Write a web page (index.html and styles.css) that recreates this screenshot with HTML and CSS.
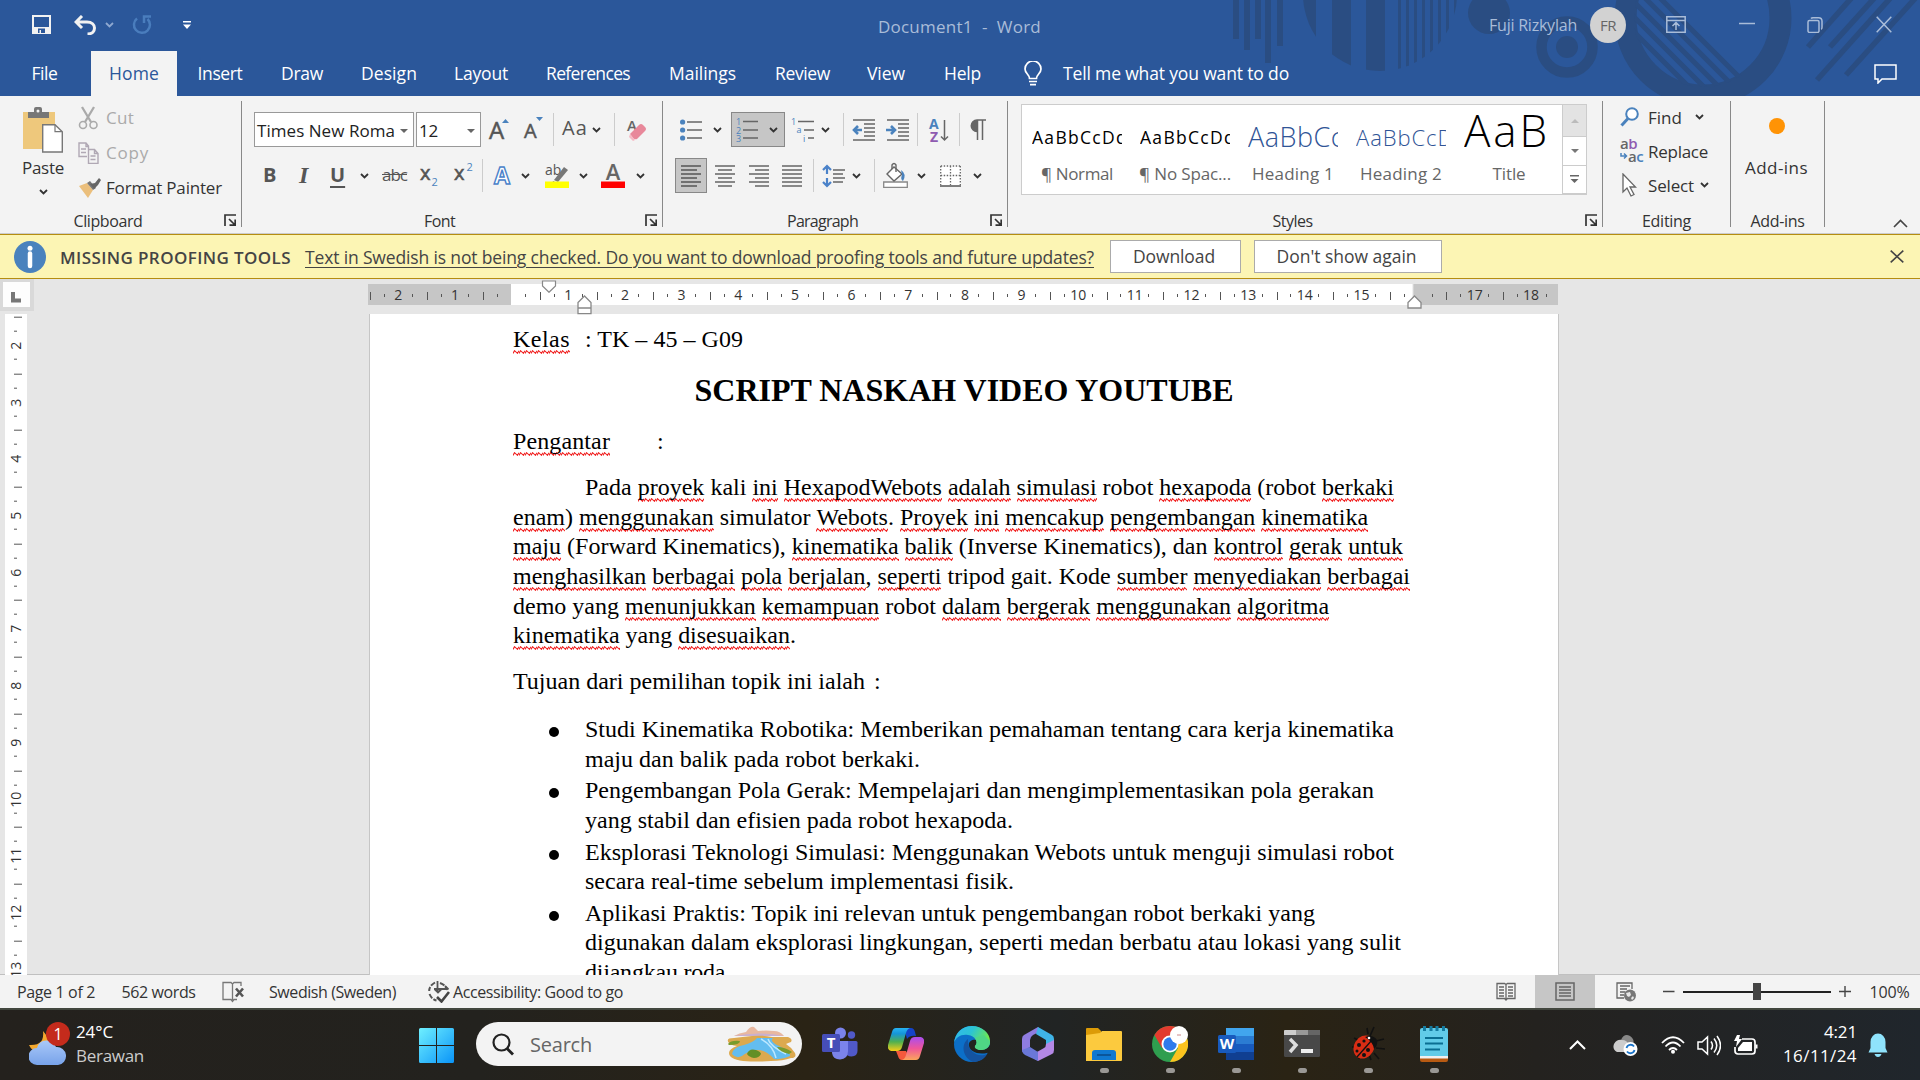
FILE: index.html
```html
<!DOCTYPE html>
<html lang="id">
<head>
<meta charset="utf-8">
<title>Document1 - Word</title>
<link rel="stylesheet" href="styles.css">
</head>
<body>
<svg width="0" height="0" class="defs">
  <defs>
    <symbol id="chev" viewBox="0 0 9 6"><path d="M1 1l3.500 3.500L8 1" fill="none" stroke="currentColor" stroke-width="1.800"/></symbol>
    <symbol id="tri" viewBox="0 0 8 4"><path d="M0 0h8L4 4z" fill="currentColor"/></symbol>
    <symbol id="launch" viewBox="0 0 12 12"><path d="M1 12V1h11M5 5l6 6M11.200 5.500v5.700H5.500" fill="none" stroke="#333" stroke-width="1.700"/></symbol>
    <symbol id="river" viewBox="0 0 71 36"><path d="M8 10q5-3 12-4 4-6 8-5l4 4q8-1 16 0 6 0 10 5z" fill="#e8b8a0"/><path d="M8 10q25-5 50 0z" fill="#c9b0cf"/><path d="M3 17q-4-5 5-5 8-1 18-2 12-1 20 1l16 0q5 2 3 5-3 1-5 2 5 3 9 9 2 5-4 5-8 3-20 3-12 1-28 0Q3 33 3 27q0-4 8-7-7-1-8-3z" fill="#dca94f"/><path d="M6 28q1-7 12-9 10-3 13-7h16q-4 3 6 8 12 6 11 10-8 4-16 3-9-10-18-9-10 2-14 6-6 3-10-2z" fill="#63bdf0"/><path d="M35 13q12 6 15 19M42 13q2 7 18 15" stroke="#bde8ff" fill="none" stroke-width="1.500"/><path d="M21 28q2-6 9-4 5 2 5 4-2 4-7 4-5-1-7-4z" fill="#638f26"/><path d="M2 18q3-4 12-3 0 4-11 4zM51 21q8 0 15 5l-3 2q-9-2-12-7z" fill="#789b2d"/></symbol>
  </defs>
</svg>

<header class="top">
  <svg class="decor" width="720" height="96" viewBox="1200 0 720 96">
    <defs><clipPath id="ball"><circle cx="1380" cy="-6" r="77"/></clipPath><clipPath id="ring"><circle cx="1703" cy="18" r="69"/></clipPath></defs>
    <g fill="#2a4d82">
      <path d="M1233 0h6v39h-6zM1244 0h6v50h-6zM1255 0h6v39h-6zM1265 0h6v63h-6zM1277 0h6v46h-6z"/>
      <path clip-path="url(#ball)" d="M1300 0h16v80h-16zM1332 0h19v80h-19zM1366 0h19v80h-19zM1398 0h3v80h-3zM1406 0h3v80h-3zM1414 0h3v80h-3zM1422 0h3v80h-3zM1430 0h3v80h-3zM1438 0h3v80h-3zM1446 0h3v80h-3zM1454 0h3v80h-3z"/>
      <circle cx="1489" cy="13" r="21"/><circle cx="1567" cy="47" r="11"/>
    </g>
    <g fill="none" stroke="#2a4d82">
      <circle cx="1567" cy="47" r="25.500" stroke-width="10.500"/>
      <circle cx="1703" cy="18" r="77.500" stroke-width="22"/>
      <path clip-path="url(#ring)" stroke-width="5" d="M1620 18l90 90M1620 3l100 100M1620-12l115 115M1620-27l120 120M1620-42l130 130"/>
      <path stroke-width="5.500" d="M1808 47l47-53M1830 47l48-53M1817 80l77-86M1846 75l74-82"/>
    </g>
  </svg>
  <div class="titlebar">
    <svg width="19" height="19" viewBox="0 0 19 19"><path d="M1 1h17v17H1z" fill="none" stroke="#f2f2f2" stroke-width="2"/><path d="M1 12h17v7H1z" fill="#f2f2f2"/><path d="M6 13.500h7V18H9v-3H7.500v3H6z" fill="#2b579a"/></svg>
    <svg width="23" height="20" viewBox="0 0 23 20"><path d="M8 1L2 7l6 6M2.500 7H13c5 0 7.500 3 7.500 6s-2 6-7 6" fill="none" stroke="#f2f2f2" stroke-width="3"/></svg>
    <svg class="dim" width="9" height="6"><use href="#chev"/></svg>
    <svg width="20" height="20" viewBox="0 0 20 20"><path d="M5 3.500A8 8 0 1 0 15.500 4M12 8V1.500h7" fill="none" stroke="#4a7dbd" stroke-width="2.500"/></svg>
    <svg width="8" height="8" viewBox="0 0 8 8"><path d="M0 0h8v1.500H0zM0 3.500h8L4 8z" fill="#fff"/></svg>
    <span class="doc-name" data-w="163">Document1  -  Word</span>
    <span class="user" data-w="88">Fuji Rizkylah</span>
    <span class="avatar">FR</span>
    <svg width="20" height="17" viewBox="0 0 20 17"><path d="M.8.800h18.400v15.400H.8zM1 4.500h18M10 14V7M6.500 10L10 6.500l3.500 3.500" fill="none" stroke="#a9bcd8" stroke-width="1.500"/></svg>
    <svg width="16" height="16" viewBox="0 0 16 16"><path d="M0 6.500h16" stroke="#a9bcd8" stroke-width="1.500"/></svg>
    <svg width="16" height="16" viewBox="0 0 16 16"><path d="M1 5a1.500 1.500 0 0 1 1.500-1.500h8A1.500 1.500 0 0 1 12 5v9a1.500 1.500 0 0 1-1.500 1.500h-8A1.500 1.500 0 0 1 1 14zM4 1.500Q4.500.8 6 .8h5.500q3.500 0 3.500 3.500v6q0 1.500-.8 2" fill="none" stroke="#a9bcd8" stroke-width="1.500"/></svg>
    <svg width="16" height="17" viewBox="0 0 16 17"><path d="M.7.700l14.600 15.600M15.300.7L.7 16.300" stroke="#a9bcd8" stroke-width="1.500"/></svg>
  </div>
  <nav class="tabs">
    <span data-w="26">File</span>
    <span class="active"><b data-w="50">Home</b></span>
    <span data-w="45">Insert</span>
    <span data-w="42">Draw</span>
    <span data-w="56">Design</span>
    <span data-w="54">Layout</span>
    <span data-w="84">References</span>
    <span data-w="67">Mailings</span>
    <span data-w="55">Review</span>
    <span data-w="38">View</span>
    <span data-w="37">Help</span>
    <svg width="18" height="25" viewBox="0 0 18 25"><path d="M5.500 17.500c0-4-4.500-5-4.500-9.500a8 8 0 0 1 16 0c0 4.500-4.500 5.500-4.500 9.500zM5 20.500h8M6 23.700h6" fill="none" stroke="#fff" stroke-width="1.700"/></svg>
    <span data-w="226">Tell me what you want to do</span>
    <svg width="23" height="20" viewBox="0 0 23 20"><path d="M1 1h21v14H8l-4 4v-4H1z" fill="none" stroke="#fff" stroke-width="1.500"/></svg>
  </nav>
</header>

<section class="ribbon">
  <div class="group g-clip">
    <div class="body clip">
      <div class="paste">
        <svg width="42" height="46" viewBox="0 0 42 46"><path d="M1 5h32v37H1z" fill="#eec87c"/><path d="M6 11V5h6V2q0-2 2-2h4q2 0 2 2v3h7v6z" fill="#777"/><circle cx="16" cy="4" r="1.500" fill="#f3f3f3"/><path d="M20.700 17.700H33l7.300 7V45H20.700z" fill="#fff" stroke="#777" stroke-width="1.400"/><path d="M33 17.700v7h7" fill="none" stroke="#777" stroke-width="1.200"/></svg>
        <span data-w="42">Paste</span>
        <svg width="9" height="6"><use href="#chev"/></svg>
      </div>
      <div class="clip-list">
        <div class="off"><svg width="22" height="24" viewBox="0 0 22 24"><path d="M4 1l9 15M16 1L7 16" fill="none" stroke="#aaa" stroke-width="2.300"/><circle cx="5" cy="19" r="3.500" fill="none" stroke="#aaa" stroke-width="1.600"/><circle cx="15.500" cy="19" r="3.500" fill="none" stroke="#aaa" stroke-width="1.600"/></svg><span data-w="28">Cut</span></div>
        <div class="off"><svg width="22" height="22" viewBox="0 0 22 22"><path d="M9 14.500H1V1h7l2.500 3v3M8 1v3.500h2.500M10.500 7.500h6l3.500 4v10h-9.500zM16.500 7.500v4H20M3 7h5M3 10.500h5M12.500 14h5M12.500 17.500h5" fill="none" stroke="#b0a8b4" stroke-width="1.400"/></svg><span data-w="43">Copy</span></div>
        <div><svg width="24" height="22" viewBox="0 0 24 22"><path d="M1 9l8-3 6 7-5 8z" fill="#ebbf7c"/><path d="M9 6l3-2 6 7-3 2z" fill="#777"/><path d="M12 7l5-1 4-5 2 2-3 5-4 4z" fill="#666"/></svg><span data-w="116">Format Painter</span></div>
      </div>
    </div>
    <div class="foot"><span data-w="69">Clipboard</span><svg width="12" height="12"><use href="#launch"/></svg></div>
  </div>
  <i class="gsep"></i>

  <div class="group g-font">
    <div class="body rows">
      <div class="row font1">
        <div class="combo wide"><span data-w="138">Times New Roma</span><svg width="8" height="4"><use href="#tri"/></svg></div>
        <div class="combo size"><span data-w="19">12</span><svg width="8" height="4"><use href="#tri"/></svg></div>
        <span class="glyph grow">A<svg width="7" height="4"><path d="M0 4h7L3.500 0z" fill="#4a82bd"/></svg></span>
        <span class="glyph shrink">A<svg width="7" height="4"><path d="M0 0h7L3.500 4z" fill="#4a82bd"/></svg></span>
        <i class="sep"></i>
        <span class="glyph case" data-w="26">Aa</span>
        <svg width="9" height="6"><use href="#chev"/></svg>
        <i class="sep"></i>
        <svg width="20" height="24" viewBox="0 0 20 24"><text x="0" y="13" class="svg-a">A</text><path d="M3 16l9-9q2-2 4 0l2 2q2 2 0 4l-8 8q-2 1-4-1z" fill="#e8889a"/><path d="M3 16l5 6-2 1-4-4z" fill="#f6b9c4"/></svg>
      </div>
      <div class="row font2">
        <b class="glyph">B</b>
        <span class="glyph italic">I</span>
        <b class="glyph under">U</b>
        <svg width="9" height="6"><use href="#chev"/></svg>
        <s class="glyph strike" data-w="25">abc</s>
        <span class="glyph script">x<em class="lo">2</em></span>
        <span class="glyph script">x<em class="hi">2</em></span>
        <i class="sep"></i>
        <b class="glyph effects">A</b>
        <svg width="9" height="6"><use href="#chev"/></svg>
        <svg width="25" height="25" viewBox="0 0 25 25"><text x="0" y="12" class="svg-ab">ab</text><path d="M9 17l10-13 4 3-10 12z" fill="#777"/><path d="M8 18l4 2-5 1z" fill="#777"/><path d="M0 18.500h24V25H0z" fill="#ff0"/></svg>
        <svg width="9" height="6"><use href="#chev"/></svg>
        <svg width="25" height="25" viewBox="0 0 25 25"><text x="12" y="17" class="svg-red">A</text><path d="M0 18.500h24V25H0z" fill="#f00"/></svg>
        <svg width="9" height="6"><use href="#chev"/></svg>
      </div>
    </div>
    <div class="foot"><span data-w="31">Font</span><svg width="12" height="12"><use href="#launch"/></svg></div>
  </div>
  <i class="gsep"></i>

  <div class="group g-para">
    <div class="body rows">
      <div class="row para1">
        <svg width="22" height="22" viewBox="0 0 22 22"><path d="M7 3h15M7 11h15M7 19h15" stroke="#666" stroke-width="1.400"/><g fill="#4a82bd"><circle cx="2.600" cy="3" r="2.600"/><circle cx="2.600" cy="11" r="2.600"/><circle cx="2.600" cy="19" r="2.600"/></g></svg>
        <svg width="9" height="6"><use href="#chev"/></svg>
        <span class="pressed"><svg width="22" height="24" viewBox="0 0 22 24"><path d="M7 3.500h15M7 12h15M7 20h15" stroke="#666" stroke-width="1.400"/><g class="svg-num"><text x="0" y="7">1</text><text x="0" y="15.500">2</text><text x="0" y="24">3</text></g></svg><svg width="9" height="6"><use href="#chev"/></svg></span>
        <svg width="24" height="24" viewBox="0 0 24 24"><path d="M7 3.500h16M13 12h10M17 20h6" stroke="#666" stroke-width="1.400"/><g class="svg-num"><text x="0" y="7">1</text><text x="5.500" y="15">a</text><text x="12" y="23.500">i</text></g></svg>
        <svg width="9" height="6"><use href="#chev"/></svg>
        <i class="sep"></i>
        <svg width="23" height="22" viewBox="0 0 23 22"><path d="M1 1h22M12 5h11M12 9h11M12 13h11M12 17h11M1 21h22" stroke="#666" stroke-width="1.400"/><path d="M10 11H2M6 7l-4 4 4 4" fill="none" stroke="#4a82bd" stroke-width="2.600"/></svg>
        <svg width="23" height="22" viewBox="0 0 23 22"><path d="M1 1h22M12 5h11M12 9h11M12 13h11M12 17h11M1 21h22" stroke="#666" stroke-width="1.400"/><path d="M0 11h8M5 7l4 4-4 4" fill="none" stroke="#4a82bd" stroke-width="2.600"/></svg>
        <i class="sep"></i>
        <svg width="20" height="24" viewBox="0 0 20 24"><text x="0" y="11" class="svg-sa">A</text><text x="1" y="24" class="svg-sz">Z</text><path d="M15.500 2v20M12 18.500l3.500 3.500 3.500-3.500" fill="none" stroke="#666" stroke-width="1.500"/></svg>
        <i class="sep"></i>
        <svg width="17" height="22" viewBox="0 0 17 22"><path d="M16 1H7a5.500 5.500 0 0 0 0 11.500V1M7.500 1v20M12.500 1v20" fill="none" stroke="#666" stroke-width="1.500"/><path d="M7 1a5.500 5.500 0 0 0 0 11.500z" fill="#666"/></svg>
      </div>
      <div class="row para2">
        <span class="pressed one"><svg width="21" height="22" viewBox="0 0 21 22"><path d="M0 1h20M0 5h16M0 9h20M0 13h16M0 17h20M0 21h16" stroke="#555" stroke-width="1.400"/></svg></span>
        <svg width="21" height="22" viewBox="0 0 21 22"><path d="M0 1h20M3 5h14M0 9h20M3 13h14M0 17h20M3 21h14" stroke="#666" stroke-width="1.400"/></svg>
        <svg width="21" height="22" viewBox="0 0 21 22"><path d="M0 1h20M6 5h14M0 9h20M6 13h14M0 17h20M6 21h14" stroke="#666" stroke-width="1.400"/></svg>
        <svg width="21" height="22" viewBox="0 0 21 22"><path d="M0 1h20M0 5h20M0 9h20M0 13h20M0 17h20M0 21h20" stroke="#666" stroke-width="1.400"/></svg>
        <i class="sep"></i>
        <svg width="23" height="24" viewBox="0 0 23 24"><path d="M11 6h12M11 10h10M11 14h12M11 18h10" stroke="#666" stroke-width="1.400"/><path d="M5 2v8M5 14v8M1 6l4-4 4 4M1 18l4 4 4-4" fill="none" stroke="#4a82c9" stroke-width="2.200"/></svg>
        <svg width="9" height="6"><use href="#chev"/></svg>
        <i class="sep"></i>
        <svg width="25" height="25" viewBox="0 0 25 25"><path d="M.7 19h23.600v5.300H.7z" fill="#fff" stroke="#888" stroke-width="1.300"/><path d="M4 11l7-7 8 7-8 7z" fill="#fff" stroke="#666" stroke-width="1.400"/><path d="M9 6V2q2-3 4 0v7" fill="none" stroke="#666" stroke-width="1.400"/><path d="M18 7q6 4 2 11-3-2-1-6z" fill="#4a82bd"/></svg>
        <svg width="9" height="6"><use href="#chev"/></svg>
        <svg width="21" height="22" viewBox="0 0 21 22"><path d="M0 0h21v21H0z" fill="#fff"/><path d="M.7 1h20M.7 10.500h20M.7 1v19M10.500 1v19M20.300 1v19" fill="none" stroke="#666" stroke-width="1.300" stroke-dasharray="1.500 1.500"/><path d="M0 21h21" stroke="#555" stroke-width="1.500"/></svg>
        <svg width="9" height="6"><use href="#chev"/></svg>
      </div>
    </div>
    <div class="foot"><span data-w="71">Paragraph</span><svg width="12" height="12"><use href="#launch"/></svg></div>
  </div>
  <i class="gsep"></i>

  <div class="group g-styles">
    <div class="body">
      <div class="gallery">
        <div class="style"><div class="sample s-normal"><span data-w="96">AaBbCcDd</span></div><span data-w="72">¶ Normal</span></div>
        <div class="style"><div class="sample s-normal"><span data-w="96">AaBbCcDd</span></div><span data-w="92">¶ No Spac...</span></div>
        <div class="style"><div class="sample s-h1"><span data-w="96">AaBbCc</span></div><span data-w="82">Heading 1</span></div>
        <div class="style"><div class="sample s-h2"><span data-w="98">AaBbCcD</span></div><span data-w="82">Heading 2</span></div>
        <div class="style"><div class="sample s-title"><span data-w="86">AaB</span></div><span data-w="33">Title</span></div>
        <div class="scroll">
          <span class="disabled"><svg width="8" height="4"><path d="M0 4h8L4 0z" fill="#bbb"/></svg></span>
          <span><svg width="8" height="4"><use href="#tri"/></svg></span>
          <span><svg width="9" height="9"><path d="M0 0h9v1.500H0zM.5 4h8l-4 4z" fill="#666"/></svg></span>
        </div>
      </div>
    </div>
    <div class="foot"><span data-w="40">Styles</span><svg width="12" height="12"><use href="#launch"/></svg></div>
  </div>
  <i class="gsep"></i>

  <div class="group g-edit">
    <div class="body edit-list">
      <div><svg width="20" height="20" viewBox="0 0 20 20"><circle cx="12" cy="7" r="5.800" fill="#fff" stroke="#4a82bd" stroke-width="2"/><path d="M8 11.500L1.500 18.500" stroke="#4a82bd" stroke-width="3"/></svg><span data-w="34">Find</span><svg class="c1" width="9" height="6"><use href="#chev"/></svg></div>
      <div><svg width="24" height="24" viewBox="0 0 24 24"><text x="0" y="10" class="svg-r">a<tspan fill="#8f5bb0">b</tspan></text><text x="8" y="22.500" class="svg-r">a<tspan fill="#4a82bd">c</tspan></text><path d="M1 14v3h5M4 14.500L6.500 17 4 19.500" fill="none" stroke="#4a82bd" stroke-width="1.500"/></svg><span data-w="60">Replace</span></div>
      <div><svg width="18" height="24" viewBox="0 0 18 24"><path d="M3 1v18l4-4 4 8 3-1.500-4-7.500h5.500z" fill="#fff" stroke="#666" stroke-width="1.300"/></svg><span data-w="46">Select</span><svg class="c2" width="9" height="6"><use href="#chev"/></svg></div>
    </div>
    <div class="foot"><span data-w="49">Editing</span></div>
  </div>
  <i class="gsep"></i>

  <div class="group g-add">
    <div class="body addins"><svg width="18" height="18"><circle cx="9" cy="9" r="8" fill="#ff9305"/></svg><span data-w="63">Add-ins</span></div>
    <div class="foot"><span data-w="54">Add-ins</span></div>
  </div>
  <i class="gsep"></i>
  <svg class="collapse" width="15" height="9" viewBox="0 0 15 9"><path d="M1 8l6.500-6.500L14 8" fill="none" stroke="#444" stroke-width="1.600"/></svg>
</section>

<section class="notice">
  <svg width="32" height="32"><circle cx="16" cy="16" r="16" fill="#4a82bd"/><path d="M16 12.500v12.500" stroke="#fff" stroke-width="4.500" stroke-linecap="round"/><circle cx="16" cy="7.300" r="2.500" fill="#fff"/></svg>
  <b data-w="231">MISSING PROOFING TOOLS</b>
  <a data-w="789">Text in Swedish is not being checked. Do you want to download proofing tools and future updates?</a>
  <span class="btn dl"><i data-w="82">Download</i></span>
  <span class="btn again"><i data-w="140">Don't show again</i></span>
  <svg class="close" width="14" height="13" viewBox="0 0 14 13"><path d="M.7.700l12.600 11.600M13.300.7L.7 12.300" stroke="#444" stroke-width="1.600"/></svg>
</section>

<main class="work">
  <div class="hruler-bar">
    <div class="tabsel"><span><svg width="10" height="11"><path d="M2 0v8.500h8" fill="none" stroke="#777" stroke-width="4"/></svg></span></div>
    <div class="hruler">
      <i></i><i>2</i><i>1</i><i></i><i>1</i><i>2</i><i>3</i><i>4</i><i>5</i><i>6</i><i>7</i><i>8</i><i>9</i><i>10</i><i>11</i><i>12</i><i>13</i><i>14</i><i>15</i><i></i><i>17</i><i>18</i>
      <svg class="m-first" width="17" height="13" viewBox="0 0 17 13"><path d="M1.500 1h13v5L8 12.300 1.500 6z" fill="#fff" stroke="#888" stroke-width="1.200"/></svg>
      <svg class="m-left" width="15" height="20" viewBox="0 0 15 20"><path d="M1 18.700V7.500L7.500 1 14 7.500v11.200zM1 13h13" fill="#fff" stroke="#888" stroke-width="1.300"/></svg>
      <svg class="m-right" width="15" height="14" viewBox="0 0 15 14"><path d="M1 13V7.500L7.500 1 14 7.500V13z" fill="#fff" stroke="#888" stroke-width="1.300"/></svg>
    </div>
  </div>
  <div class="canvas">
    <div class="vruler"><i>2</i><i>3</i><i>4</i><i>5</i><i>6</i><i>7</i><i>8</i><i>9</i><i>10</i><i>11</i><i>12</i><i>13</i></div>
    <article class="page">
      <p class="kelas"><span class="first"><u data-w="57">Kelas</u></span><span data-w="158">: TK – 45 – G09</span></p>
      <h1><span data-w="539">SCRIPT NASKAH VIDEO YOUTUBE</span></h1>
      <p class="intro"><span class="first"><u data-w="97">Pengantar</u></span><span>:</span></p>
      <div class="para">
        <p class="indent"><span data-w="809">Pada <u>proyek</u> kali <u>ini</u> <u>HexapodWebots</u> <u>adalah</u> <u>simulasi</u> robot <u>hexapoda</u> (robot <u>berkaki</u></span></p>
        <p><span data-w="855"><u>enam</u>) <u>menggunakan</u> simulator <u>Webots</u>. <u>Proyek</u> <u>ini</u> <u>mencakup</u> <u>pengembangan</u> <u>kinematika</u></span></p>
        <p><span data-w="890"><u>maju</u> (Forward Kinematics), <u>kinematika</u> <u>balik</u> (Inverse Kinematics), dan <u>kontrol</u> <u>gerak</u> <u>untuk</u></span></p>
        <p><span data-w="897"><u>menghasilkan</u> <u>berbagai</u> <u>pola</u> <u>berjalan</u>, <u>seperti</u> tripod gait. Kode <u>sumber</u> <u>menyediakan</u> <u>berbagai</u></span></p>
        <p><span data-w="816">demo yang <u>menunjukkan</u> <u>kemampuan</u> robot <u>dalam</u> <u>bergerak</u> <u>menggunakan</u> <u>algoritma</u></span></p>
        <p><span data-w="283"><u>kinematika</u> yang <u>disesuaikan</u>.</span></p>
      </div>
      <p class="goal"><span data-w="352">Tujuan dari pemilihan topik ini ialah</span><span>:</span></p>
      <ul>
        <li><span data-w="809">Studi Kinematika Robotika: Memberikan pemahaman tentang cara kerja kinematika</span><br><span data-w="335">maju dan balik pada robot berkaki.</span></li>
        <li><span data-w="789">Pengembangan Pola Gerak: Mempelajari dan mengimplementasikan pola gerakan</span><br><span data-w="428">yang stabil dan efisien pada robot hexapoda.</span></li>
        <li><span data-w="809">Eksplorasi Teknologi Simulasi: Menggunakan Webots untuk menguji simulasi robot</span><br><span data-w="429">secara real-time sebelum implementasi fisik.</span></li>
        <li><span data-w="730">Aplikasi Praktis: Topik ini relevan untuk pengembangan robot berkaki yang</span><br><span data-w="816">digunakan dalam eksplorasi lingkungan, seperti medan berbatu atau lokasi yang sulit</span><br><span data-w="146">dijangkau roda.</span></li>
      </ul>
    </article>
  </div>
</main>

<footer class="status">
  <span data-w="78">Page 1 of 2</span>
  <span data-w="74">562 words</span>
  <svg width="22" height="22" viewBox="0 0 22 22"><path d="M10.500 19V3L9 1.500H1v17h8l1.500 2 1.500-2h3M10.500 3L12 1.500h7V5" fill="none" stroke="#777" stroke-width="1.300"/><path d="M14 7.500l7 8M21 7.500l-7 8" stroke="#555" stroke-width="2.600"/></svg>
  <span data-w="127">Swedish (Sweden)</span>
  <svg width="22" height="22" viewBox="0 0 22 22"><path d="M7 1.500Q1 5 1.200 10M1.500 13q2 5 7 6.500M12 2q6 2 7 7" fill="none" stroke="#555" stroke-width="2" stroke-dasharray="5 1.500"/><path d="M9.500 0v11M6 8h12M6.500 8l3.500 3.500L13.500 8M17 5l3.500 3.500" fill="none" stroke="#555" stroke-width="1.800"/><path d="M9 16l4.500 4.500L21 11" fill="none" stroke="#444" stroke-width="2.600"/></svg>
  <span data-w="170">Accessibility: Good to go</span>
  <svg width="20" height="20" viewBox="0 0 20 20"><path d="M1 1.500h7.500l1.500 1 1.500-1H19v15h-7.500L10 18l-1.500-1.500H1zM10 2.500V19M3 5h5M3 8h5M3 11h5M3 14h5M12 5h5M12 8h5M12 11h5M12 14h5" fill="none" stroke="#666" stroke-width="1.300"/></svg>
  <span class="view"><svg width="20" height="19" viewBox="0 0 20 19"><path d="M1 1h18v17H1zM4 5h12M4 8h12M4 11h12M4 14h12" fill="none" stroke="#666" stroke-width="1.500"/></svg></span>
  <svg width="21" height="20" viewBox="0 0 21 20"><path d="M8 16H1V1h15v6M4 4h10M4 7h7M4 10h5M4 13h4" fill="none" stroke="#666" stroke-width="1.300"/><circle cx="14" cy="13.500" r="6" fill="#777"/><path d="M10 11l4-1 1 3-2 2-2-1zM15 16l2-2 1 2-2 2z" fill="#e8e8e8"/></svg>
  <svg width="190" height="18" viewBox="0 0 190 18"><path d="M0 8.500h11.500M176 8.500h12M182 3v11" stroke="#444" stroke-width="1.400"/><path d="M20 9h148" stroke="#222" stroke-width="2"/><path d="M90 0h8v17h-8z" fill="#444"/></svg>
  <span data-w="40">100%</span>
</footer>

<footer class="taskbar">
  <div class="weather">
    <svg width="44" height="46" viewBox="0 0 44 46"><defs><linearGradient id="cl" x2="0" y2="1"><stop stop-color="#a9c8f8"/><stop offset="1" stop-color="#78a3ea"/></linearGradient></defs><path d="M14 9q2 15-14 14 4 9 14 5 10-8 0-19z" fill="#f4a92f"/><path d="M8 43a8.500 8.500 0 0 1 0-17 10 10 0 0 1 19-1 9 9 0 0 1 2 18z" fill="url(#cl)"/><circle cx="29" cy="12" r="12" fill="#c42b1c"/><text x="29" y="18" class="svg-badge">1</text></svg>
    <div><span data-w="37">24°C</span><span class="cond" data-w="68">Berawan</span></div>
  </div>
  <svg class="start" width="35" height="35" viewBox="0 0 35 35"><defs><linearGradient id="win" gradientUnits="userSpaceOnUse" x2="35" y2="35"><stop stop-color="#6ff0ff"/><stop offset="1" stop-color="#0a94f8"/></linearGradient></defs><path d="M0 1.500Q0 0 1.500 0H17v17H0zM18 0h15.500Q35 0 35 1.500V17H18zM0 18h17v17H1.500Q0 35 0 33.500zM18 18h17v15.500q0 1.500-1.500 1.500H18z" fill="url(#win)"/></svg>
  <div class="search">
    <svg width="23" height="23" viewBox="0 0 23 23"><circle cx="9.500" cy="9.500" r="8" fill="none" stroke="#222" stroke-width="2.200"/><path d="M15 15.500l6 6" stroke="#222" stroke-width="2.800"/></svg>
    <span data-w="62">Search</span>
    <svg class="art" width="71" height="36"><use href="#river"/></svg>
  </div>
  <div class="apps">
    <span><svg width="36" height="36" viewBox="0 0 36 36"><circle cx="18.500" cy="7" r="5.500" fill="#7b83eb"/><circle cx="29.500" cy="9" r="3.700" fill="#5059c9"/><path d="M24 15h10q1.500 0 1.500 1.500V25q0 5-6 5.500-5 0-5.500-4z" fill="#5059c9"/><path d="M11 15h15v10q0 8-8 8.500-7 0-8-6.500z" fill="#7b83eb"/><rect y="8" width="18" height="18" rx="1.500" fill="#464eb8"/><text x="9" y="22" class="svg-app">T</text></svg></span>
    <span><svg width="36" height="36" viewBox="0 0 36 36"><defs><linearGradient id="c1" x2="0" y2="1"><stop stop-color="#27b3f3"/><stop offset=".25" stop-color="#1595d8"/><stop offset=".6" stop-color="#4fb050"/><stop offset="1" stop-color="#f7ce17"/></linearGradient><linearGradient id="c2" x2="0" y2="1"><stop stop-color="#a94df0"/><stop offset=".5" stop-color="#f0569a"/><stop offset="1" stop-color="#fba55a"/></linearGradient></defs><path d="M16 2h7q3 0 4 4l1 4q-6-1-9 3z" fill="#1443c8"/><path d="M8 25h10l2 4-3 5h-3q-3 0-4-4z" fill="#f4593c"/><path d="M8 2h14q-3 1-4 5l-4 14q-1 4-5 4H3q-4-1-3-6L4 6q1-4 4-4z" fill="url(#c1)"/><path d="M28 34H14q3-1 4-5l4-14q1-4 5-4h6q4 1 3 6l-4 13q-1 4-4 4z" fill="url(#c2)"/></svg></span>
    <span><svg width="36" height="36" viewBox="0 0 36 36"><defs><linearGradient id="e1" x2="1" y2=".4"><stop stop-color="#32b7f0"/><stop offset=".5" stop-color="#2cc3d4"/><stop offset="1" stop-color="#6fea4c"/></linearGradient></defs><circle cx="18" cy="18" r="18" fill="#0c6fc8"/><path d="M0 17C1 7 8 0 18 0s18 7 18 15c0 6-4 9-9 9-4 0-7-1-6-4 4-4 0-10-7-11C7 8 2 11 0 17z" fill="url(#e1)"/><path d="M14 13c-7 5-6 18 5 23 6 0 12-3 14-8-4 2-10 2-14-2-5-4-5-8-5-13z" fill="#1453a0"/><path d="M22 14c-3-1-8 1-7 6s8 9 18 7l4-1V14c0 6-4 10-9 10-4 0-7-2-7-4 2-2 2-4 1-6z" fill="#22231f"/><path d="M21 20c2-2 2-5 0-8l9-3 6 6c0 6-4 9-9 9-4 0-7-2-6-4z" fill="#4fd685"/></svg></span>
    <span><svg width="36" height="36" viewBox="0 0 36 36"><path d="M18 1L4 9q-2 1-2 4v13l8-5V14q0-3 3-5l8-4z" fill="#8f7ce0"/><path d="M18 1l14 8q2 1 2 4v10l-8-5v-4l-10-6 2-7z" fill="#3fb4e8"/><path d="M34 14v10q0 3-2 4l-14 7-8-5 14-8q2-1 2-4z" fill="#b488e6"/><path d="M2 24q0 3 3 5l13 6v-9l-8-5z" fill="#6a78d8"/></svg></span>
    <span class="run"><svg width="36" height="36" viewBox="0 0 36 36"><path d="M0 3q0-1 1-1h11l3 3v5H0z" fill="#dc9b07"/><path d="M0 9l14-2 2-2h19q1 0 1 1v28q0 1-1 1H0z" fill="#fcca3e"/><path d="M6 34v-7q0-3 3-3h18q3 0 3 3v7z" fill="#0f78d0"/><path d="M11 29h14" stroke="#0a4a88" stroke-width="1.500"/></svg></span>
    <span class="run"><svg width="36" height="36" viewBox="0 0 36 36"><circle cx="18" cy="18" r="18" fill="#2f9e4f"/><path d="M2.400 9A18 18 0 0 1 33.600 9H18L10 22z" fill="#e33b2e"/><path d="M33.600 9A18 18 0 0 1 18 36l8-14-8-13z" fill="#fcc31e"/><circle cx="18" cy="18" r="8.500" fill="#fff"/><circle cx="18" cy="18" r="6.700" fill="#2f7bec"/><circle cx="27" cy="9" r="9" fill="#fff"/><path d="M25 9h4" stroke="#c88" stroke-width="1"/></svg></span>
    <span class="run"><svg width="36" height="36" viewBox="0 0 36 36"><path d="M8 2h28v8H8z" fill="#41a5ee"/><path d="M8 10h28v8H8z" fill="#2b7cd3"/><path d="M8 18h28v8H8z" fill="#185abd"/><path d="M8 26h28v8H8z" fill="#103f91"/><rect y="9" width="18" height="18" rx="1.500" fill="#185abd"/><text x="9" y="23" class="svg-app">W</text></svg></span>
    <span class="run"><svg width="36" height="36" viewBox="0 0 36 36"><rect y="4" width="36" height="27" rx="1.500" fill="#484848"/><path d="M0 9V5q0-1 1-1h11v5z" fill="#ccc"/><path d="M12 4h12v5H12z" fill="#999"/><path d="M24 4h12v5H24z" fill="#666"/><path d="M6 13l6 6-6 7" fill="none" stroke="#ddd" stroke-width="3.500"/><path d="M17 23h12v4H17z" fill="#eee"/></svg></span>
    <span class="run"><svg width="36" height="36" viewBox="0 0 36 36"><path d="M4 12l6 3M2 21h6M9 33l2-6M21 34l-2-6M24 27l5 6M26 22l9 1M26 15l8-2M18 8l-1-6M20 10l4-9" stroke="#111" stroke-width="1.600"/><ellipse cx="14" cy="21" rx="10" ry="12" transform="rotate(30 14 21)" fill="#d92d14"/><path d="M15 11q8-3 12 3 1 6-3 9-1-7-9-12z" fill="#111"/><path d="M22 14L7 31" stroke="#111" stroke-width="1.300"/><g fill="#111"><circle cx="9" cy="19" r="2"/><circle cx="14" cy="15" r="1.600"/><circle cx="18" cy="24" r="2"/><circle cx="14" cy="29" r="2"/><circle cx="7" cy="25" r="1.500"/></g><circle cx="19" cy="12" r="1.300" fill="#fff"/></svg></span>
    <span class="run"><svg width="36" height="36" viewBox="0 0 36 36"><path d="M4 29h28v5q0 2-2 2H6q-2 0-2-2z" fill="#b85a12"/><path d="M4 27h28v5.500H4z" fill="#f0f0f0"/><path d="M4 4q0-2 2-2h24q2 0 2 2v26H4z" fill="#61cbe8"/><path d="M9 12h18M9 17.500h18M9 23.500h15" stroke="#0a6e92" stroke-width="2"/><path d="M8.500 0v5M15 0v5M21 0v5M27.500 0v5" stroke="#157ba0" stroke-width="3"/></svg></span>
  </div>
  <div class="tray">
    <svg width="17" height="10" viewBox="0 0 17 10"><path d="M1 9l7.500-7.500L16 9" fill="none" stroke="#fff" stroke-width="2"/></svg>
    <svg width="25" height="24" viewBox="0 0 25 24"><path d="M8 7q3-7 9-4 5 3 3 9z" fill="#888"/><path d="M4 19q-5-3-3-8 3-5 8-4 5 0 7 5v7z" fill="#ccc"/><circle cx="17.500" cy="16" r="7" fill="#fff"/><path d="M13.500 15a4.200 4.200 0 0 1 7.500-1.500M21.500 17a4.200 4.200 0 0 1-7.500 1.500" fill="none" stroke="#1b74c9" stroke-width="1.800"/></svg>
    <svg width="24" height="18" viewBox="0 0 24 18"><path d="M1 7q11-11.500 22 0M4.500 10.500q7.500-8 15 0M8 14q4-4 8 0" fill="none" stroke="#fff" stroke-width="1.800"/><circle cx="12" cy="15.700" r="2" fill="#fff"/></svg>
    <svg width="24" height="21" viewBox="0 0 24 21"><path d="M1 7v7h4l5.500 5V2L5 7zM14 6.500q3 4 0 8M17 3.500q5.500 7 0 14M20 1q7 9.500 0 19" fill="none" stroke="#fff" stroke-width="1.500"/></svg>
    <svg width="25" height="21" viewBox="0 0 25 21"><path d="M9 4h10q3 0 3 3v9q0 3-3 3H5q-3 0-3-3v-4" fill="none" stroke="#fff" stroke-width="1.700"/><path d="M10 7h9v9H5v-3zM22.500 9.500h2v4h-2zM4 0h3L6 4h3l-6 8 1-6H1z" fill="#fff"/></svg>
    <div class="clock"><span data-w="33">4:21</span><span data-w="74">16/11/24</span></div>
    <svg width="20" height="25" viewBox="0 0 20 25"><path d="M2.500 9a7.500 8.500 0 0 1 15 0v6l2 4.500H.5l2-4.500zM6.500 21h7q-1 3-3.500 3t-3.500-3z" fill="#8fe3fc"/></svg>
  </div>
</footer>
<script src="fit.js"></script>
</body>
</html>
```
FILE: styles.css
```css
* { box-sizing: border-box; }
body { margin: 0; width: 1920px; height: 1080px; overflow: hidden; display: flex; flex-direction: column; font-family: "Open Sans", "Noto Sans", sans-serif; font-size: 16px; color: #333; background: #e6e6e6; }
svg { flex: none; display: block; }
i, em { font-style: normal; }
.defs { position: absolute; }
[data-w] { white-space: pre; display: inline-block; width: max-content; justify-self: start; flex: none; }
svg text { font-family: "Open Sans", sans-serif; }

/* Title bar and tabs */
.top { position: relative; height: 96px; flex: none; background: #2b579a; }
.decor { position: absolute; right: 0; top: 0; }
.titlebar { position: relative; height: 51px; display: grid; grid-template-columns: 41.500px 31.500px 27px 51px 695px 611px 101px 76px 73px 68px 69px 20px; align-items: center; padding: 0 0 2px 32px; color: #a9bcd8; }
.dim { color: #8ea8d0; }
.titlebar .doc-name { font-size: 17px; padding-top: 4px; }
.doc-name + .user { font-size: 16px; }
.avatar { width: 36px; height: 36px; border-radius: 50%; background: #d2d2d2; color: #666; font-size: 15px; letter-spacing: -.5px; display: flex; align-items: center; justify-content: center; }
.tabs { position: relative; height: 45px; display: grid; grid-template-columns: 59.500px 106.500px 83.500px 80px 93px 92px 123px 106px 92px 77px 80px 39px auto 23px; align-items: center; padding: 0 23px 0 31.500px; color: #fff; font-size: 17.500px; }
.tabs > [data-w], .tabs b { padding-bottom: 2px; }
.tabs .active { width: 86px; height: 45px; background: #f3f3f3; color: #2b579a; display: flex; align-items: center; justify-content: center; }
.tabs b { font-weight: 400; }

/* Ribbon */
.ribbon { height: 138px; flex: none; background: #f3f3f3; border-bottom: 1px solid #ccc; display: flex; }
.gsep { width: 1px; height: 126px; margin-top: 5px; background: #888; }
.group { display: flex; flex-direction: column; }
.g-clip { width: 241px; }
.g-font { width: 420px; }
.g-para { width: 344px; }
.g-styles { width: 594px; }
.g-edit { width: 127px; }
.g-add { width: 93px; }
.body { height: 112px; }
.foot { height: 26px; display: grid; grid-template-columns: 1fr auto; padding-right: 5px; align-items: center; }
.foot > span { justify-self: center; margin-left: -8px; padding-top: 2px; }
.g-edit .foot, .g-add .foot { padding-right: 0; grid-template-columns: 1fr; }
.g-edit .foot > span, .g-add .foot > span { margin-left: 0; }
.clip { display: flex; padding-left: 22px; gap: 14px; }
.paste { width: 42px; padding-top: 11px; display: flex; flex-direction: column; align-items: center; font-size: 17px; }
.paste span { margin: 2px 0 9px; line-height: 25px; }
.clip-list { padding-top: 4px; font-size: 17px; }
.clip-list div { height: 35px; display: grid; grid-template-columns: 28px auto; align-items: center; }
.off { color: #aaa; }
.rows { display: flex; flex-direction: column; gap: 11px; padding-top: 16px; }
.row { height: 35px; display: grid; align-items: center; color: #333; }
.row svg { overflow: visible; }
.font1 { padding-left: 12px; grid-template-columns: 162px 73px 35px 29px 9px 30px 22px 13px 22px; }
.font2 { padding-left: 21px; grid-template-columns: 34px 33px 30px 22px 38px 34px 28px 12px 27px 24px 34px 22px 35px 9px; }
.para1 { padding-left: 17px; grid-template-columns: 33px 18px 60px 30px 22px 9px 33.500px 31.500px 12px 29.500px 11.500px 17px; }
.para2 { padding-left: 12px; grid-template-columns: 40px 34px 33px 31px 9px 30px 22px 9px 34px 23px 33px 9px; }
.sep { width: 1px; height: 33px; background: #ccc; }
.combo { height: 35px; border: 1px solid #999; background: #fff; display: flex; align-items: center; justify-content: space-between; padding: 2px 5px 0 2px; font-size: 17px; color: #222; }
.combo svg { color: #666; }
.wide { width: 160px; }
.size { width: 65px; }
.glyph { color: #555; line-height: 30px; font-size: 20px; }
.grow, .shrink { display: flex; }
.grow { font-size: 24px; -webkit-text-stroke: .5px #555; }
.shrink { font-size: 20px; padding-top: 3px; -webkit-text-stroke: .5px #555; }
.grow svg { margin: 4px 0 0 -2px; }
.shrink svg { margin: 1px 0 0 -1px; }
.glyph.case { font-size: 20px; padding-bottom: 3px; }
.font2 .glyph { padding-bottom: 2px; }
.font2 .glyph.italic { font: italic 700 24px/30px "Liberation Serif", serif; padding-left: 2px; }
.under { text-decoration: underline; text-underline-offset: 4px; text-decoration-thickness: 1.500px; }
.strike { font-size: 17px; }
.script { font-size: 20px; -webkit-text-stroke: .6px #555; }
.script em { font-size: 11px; color: #4a82bd; -webkit-text-stroke: 0; position: relative; }
.lo { top: 6px; left: 1px; }
.hi { top: -9px; left: 2px; }
.font2 .effects { font-size: 23px; color: #fff; -webkit-text-stroke: 1.400px #4a82c9; }
.svg-a { font-size: 15px; fill: #666; font-weight: 600; }
.svg-ab { font-size: 14px; fill: #555; }
.svg-red { font-size: 22px; fill: #666; text-anchor: middle; font-weight: 600; }
.svg-num { font-size: 9px; fill: #4a82bd; }
.svg-sa { font-size: 14px; font-weight: 700; fill: #4a82bd; }
.svg-sz { font-size: 14px; font-weight: 700; fill: #8f5bb0; }
.svg-r { font-size: 15px; font-weight: 600; fill: #666; letter-spacing: -.5px; }
.pressed { width: 54px; height: 35px; background: #c6c6c6; border: 1px solid #888; display: flex; align-items: center; justify-content: space-between; padding: 0 6px 0 4px; }
.pressed.one { width: 32px; padding: 0 5px; }

.g-styles .body { padding: 8px 0 0 13px; }
.gallery { width: 566px; height: 91px; background: #fff; border: 1px solid #ccc; display: grid; grid-template-columns: repeat(5, 108px) auto; }
.style { display: flex; flex-direction: column; align-items: center; font-size: 17px; color: #666; line-height: 24px; padding: 10px 0 0 2px; }
.sample { width: 90px; height: 46px; overflow: hidden; white-space: nowrap; color: #000; margin-bottom: 1px; }
.s-normal { font-size: 17.500px; line-height: 45px; }
.s-h1 { font-size: 27px; font-weight: 300; color: #2f5496; line-height: 43px; }
.s-h2 { font-size: 22px; font-weight: 300; color: #2f5496; line-height: 44px; }
.s-title { font-size: 44px; font-weight: 300; line-height: 30px; }
.scroll { width: 24px; border-left: 1px solid #ccc; display: grid; grid-template-rows: 32px 29px 28px; color: #777; }
.scroll span { display: flex; align-items: center; justify-content: center; border-bottom: 1px solid #ccc; }
.scroll .disabled { background: #e3e3e3; }
.edit-list { padding: 4px 0 0 17px; font-size: 17px; }
.edit-list div { height: 34px; display: grid; grid-template-columns: 28px auto auto; justify-content: start; align-items: center; }
.c1 { margin-left: 13px; }
.c2 { margin-left: 6px; }
.addins { display: flex; flex-direction: column; align-items: center; padding: 21px 2px 0 0; gap: 21px; font-size: 17px; line-height: 24px; }
.collapse { margin: 123px 0 0 68px; }

/* Message bar */
.notice { height: 45px; flex: none; background: #fcf5b4; border: solid #b58d10; border-width: 1px 0; display: flex; align-items: center; padding: 0 16px 0 14px; font-size: 17.500px; color: #444; }
.notice b { margin-left: 14px; font-weight: 600; font-size: 17px; padding-top: 1px; }
.notice a { margin-left: 14px; text-decoration: underline; text-underline-offset: 3px; text-decoration-thickness: 1px; }
.btn { height: 33px; background: #fff; border: 1px solid #ababab; display: flex; align-items: center; justify-content: center; padding: 0 3px 1px 0; }
.dl { width: 131px; margin-left: 16px; }
.again { width: 188px; margin-left: 13px; }
.close { margin-left: auto; }

/* Workspace */
.work { height: 696px; flex: none; display: flex; flex-direction: column; border-bottom: 1px solid #c0c0c0; }
.hruler-bar { height: 35px; flex: none; display: flex; }
.tabsel { width: 34px; height: 32px; background: #d9d9d9; padding: 3px 4px 4px 3px; }
.tabsel span { height: 25px; background: #fdfdfd; display: flex; align-items: flex-end; padding: 0 0 4px 8px; }
.hruler { position: relative; width: 1190px; height: 21px; margin: 5px 0 0 334px; display: flex; background: linear-gradient(90deg, #c6c6c6 143px, #fff 143px 1044px, #c6c6c6 1046px); font-size: 14px; line-height: 22px; text-align: center; }
.hruler i { flex: none; width: 56.670px; background: linear-gradient(#555, #555) no-repeat 0 8px / 1px 8px, linear-gradient(#555, #555) no-repeat 25% 10px / 1px 3px, linear-gradient(#555, #555) no-repeat 75% 10px / 1px 3px; }
.hruler i:first-child { width: 2px; background: none; }
.hruler i:last-of-type { width: 46px; background-position: 0 8px, 14px 10px, 43px 10px; text-indent: 10px; }
.m-first { position: absolute; left: 173px; top: -4px; }
.m-left { position: absolute; left: 209px; top: 11px; }
.m-right { position: absolute; left: 1039px; top: 11px; }
.canvas { height: 661px; flex: none; display: flex; overflow: hidden; }
.vruler { width: 22px; margin-left: 5px; background: #fff; padding-top: 3px; font-size: 14px; line-height: 22px; text-align: center; }
.vruler i { display: block; height: 56.700px; writing-mode: vertical-rl; transform: rotate(180deg); width: 22px; background: linear-gradient(#555, #555) no-repeat 5px 100% / 8px 1px, linear-gradient(#555, #555) no-repeat 10px 25% / 3px 1px, linear-gradient(#555, #555) no-repeat 10px 75% / 3px 1px; }
.page { width: 1190px; height: 700px; margin-left: 342px; background: #fff; border: solid #c6c6c6; border-width: 0 1px; padding: 11px 0 0 143px; font: 24px/29.700px "Liberation Serif", "Times New Roman", serif; color: #000; }
.page p { margin: 0; height: 29.700px; white-space: nowrap; }
.page u { text-decoration: none; display: inline-block; line-height: 29px; background: url("data:image/svg+xml,%3Csvg xmlns='http://www.w3.org/2000/svg' width='6' height='4'%3E%3Cpath d='M0 3.500L1.500.7l3 2.600L6 .7' fill='none' stroke='%23f02020' stroke-width='1.100'/%3E%3C/svg%3E") repeat-x 0 25px; }
.page .kelas, .page .intro { display: flex; }
.kelas .first { width: 72px; }
.intro .first { width: 144px; }
.page h1 { margin: 15px 0 0; width: 902px; text-align: center; font-size: 32px; line-height: 40px; }
.page .intro { margin-top: 17px; }
.para { margin-top: 16.500px; }
.indent { padding-left: 72px; }
.page .goal { margin-top: 15.500px; display: flex; gap: 9px; }
.page ul { list-style: none; margin: 19px 0 0; padding: 0 0 0 72px; }
.page li { position: relative; margin-bottom: 2px; line-height: 29.600px; }
.page li span { vertical-align: top; }
.page li::before { content: ""; position: absolute; left: -36px; top: 12px; width: 10px; height: 10px; border-radius: 50%; background: #000; }

/* Status bar */
.status { height: 35px; flex: none; background: #f3f3f3; border-bottom: 2px solid #43473f; display: grid; grid-template-columns: 104.500px 100.500px 47px 159px 25px 1042.500px 39px 81px 47px 207px auto; align-items: center; padding-left: 17px; font-size: 16px; }
.view { width: 60px; height: 33px; background: #c6c6c6; display: flex; align-items: center; justify-content: center; }

/* Taskbar */
.taskbar { height: 70px; flex: none; display: flex; align-items: center; background: linear-gradient(90deg, #24211d, #23221e 25%, #2a2315 42%, #212424 55%, #2a2314 67%, #24221f 80%, #20262c); color: #fff; font-size: 17px; }
.weather { width: 390px; padding: 0 0 0 29px; display: flex; gap: 3px; }
.weather div, .clock { display: flex; flex-direction: column; }
.weather div { margin-top: -2px; }
.weather span, .clock span { line-height: 24px; }
.cond { color: #ccc; }
.start { margin-left: 29px; }
.search { width: 326px; height: 44px; margin: -2px 0 0 22px; border-radius: 22px; background: #f3f3f3; display: flex; align-items: center; padding-left: 16px; color: #666; font-size: 20px; }
.search span { margin-left: 15px; }
.art { margin-left: auto; margin-right: 5px; }
.apps { display: flex; gap: 30px; margin-left: 20px; height: 70px; }
.apps > span { width: 36px; padding-top: 16px; display: flex; flex-direction: column; align-items: center; gap: 6px; }
.run::after { content: ""; width: 9px; height: 5px; border-radius: 3px; background: #9a9895; }
.tray { margin-left: 117px; display: grid; grid-template-columns: 44px 48px 36px 36px 50px 85px 20px; align-items: center; }
.clock { width: 74px; align-items: flex-end; margin-top: -2px; }
.svg-badge { font-size: 16px; fill: #fff; text-anchor: middle; }
.svg-app { font-size: 15px; font-weight: 700; fill: #fff; text-anchor: middle; }
```
FILE: fit.js
```js
// Tracks each label so that it fills the width given in data-w.
document.querySelectorAll('[data-w]').forEach(function (el) {
  var target = parseFloat(el.dataset.w);
  var natural = el.getBoundingClientRect().width;
  el.style.letterSpacing = ((target - natural) / el.textContent.length) + 'px';
});
```
